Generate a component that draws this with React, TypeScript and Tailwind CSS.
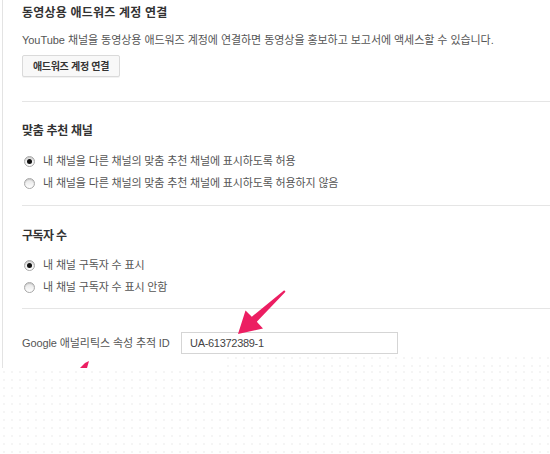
const dots = 'bg-[radial-gradient(#f5f5f5_1px,transparent_1.2px)] bg-[length:8px_8px] bg-white'

function Radio({ checked, label }: { checked?: boolean; label: string }) {
  return (
    <label className="flex items-center h-4 text-[11px] tracking-[-0.15px] text-[#555]">
      <span className="ml-[2px] w-[11px] h-[11px] rounded-full border border-[#a8a8a8] bg-gradient-to-b from-[#e4e4e4] to-white flex items-center justify-center shadow-[inset_0_1px_1px_rgba(0,0,0,0.15)]">
        {checked && <span className="w-[5px] h-[5px] rounded-full bg-[#111]" />}
      </span>
      <span className="ml-[8px]">{label}</span>
    </label>
  )
}

function Heading({ children, className = '' }: { children: React.ReactNode; className?: string }) {
  return <h3 className={`h-4 leading-4 text-[12px] font-bold text-[#333] ${className}`}>{children}</h3>
}

export default function App() {
  return (
    <div className="relative w-[550px] h-[454px] bg-white overflow-hidden font-['Liberation_Sans','Noto_Sans_CJK_KR',sans-serif]">
      <div className="relative h-[368px] overflow-hidden ml-[2px] border-l border-[#e3e3e3] pl-[19px]">
        {/* adwords */}
        <section className="pt-[5px] pb-[24px] border-b border-[#e5e5e5]">
          <Heading className="tracking-[0.2px]">동영상용 애드워즈 계정 연결</Heading>
          <p className="mt-[11px] h-4 leading-4 text-[11px] tracking-[-0.05px] text-[#555]">
            YouTube 채널을 동영상용 애드워즈 계정에 연결하면 동영상을 홍보하고 보고서에 액세스할 수 있습니다.
          </p>
          <button className="mt-[7px] h-[22px] w-[98px] rounded-[2px] border border-[#dadada] bg-[#f8f8f8] shadow-[0_1px_0_rgba(0,0,0,0.05)] text-[10px] font-bold tracking-[-0.3px] text-[#333]">
            애드워즈 계정 연결
          </button>
        </section>

        {/* featured channels */}
        <section className="pt-[21px] pb-[14px] border-b border-[#e5e5e5]">
          <Heading className="tracking-[-0.3px]">맞춤 추천 채널</Heading>
          <div className="mt-[14px] flex flex-col gap-[6px]">
            <Radio checked label="내 채널을 다른 채널의 맞춤 추천 채널에 표시하도록 허용" />
            <Radio label="내 채널을 다른 채널의 맞춤 추천 채널에 표시하도록 허용하지 않음" />
          </div>
        </section>

        {/* subscribers */}
        <section className="pt-[22px] pb-[13px] border-b border-[#e5e5e5]">
          <Heading className="tracking-[-0.6px]">구독자 수</Heading>
          <div className="mt-[13px] flex flex-col gap-[6px]">
            <Radio checked label="내 채널 구독자 수 표시" />
            <Radio label="내 채널 구독자 수 표시 안함" />
          </div>
        </section>

        {/* analytics */}
        <section className="pt-[23px] flex items-center">
          <span className="w-[159px] text-[11px] tracking-[-0.1px] text-[#555]">Google 애널리틱스 속성 추적 ID</span>
          <div className="w-[217px] h-[22px] border border-[#d5d5d5] flex items-center pl-[8px] text-[11px] tracking-[-0.3px] text-[#444]">
            UA-61372389-1
          </div>
        </section>

        <svg className="absolute left-[-3px] top-0 pointer-events-none" width="550" height="368" viewBox="0 0 550 368">
          <polygon points="80,368 85,363 89,361 87,368" fill="#ec1e62" />
        </svg>
      </div>

      {/* torn bottom edge */}
      <div className={`absolute left-0 top-[368px] w-[550px] h-[86px] ${dots}`} />
      <div className={`absolute left-[224px] top-[354px] w-[326px] h-[14px] ${dots}`} />

      <svg className="absolute left-0 top-0 pointer-events-none" width="550" height="368" viewBox="0 0 550 368">
        <polygon
          points="285.5,291.8 256.8,321.8 263,328.5 238,334 245.5,310.5 251.8,316.8 284.2,290.2"
          fill="#ec1e62"
        />
      </svg>
    </div>
  )
}
